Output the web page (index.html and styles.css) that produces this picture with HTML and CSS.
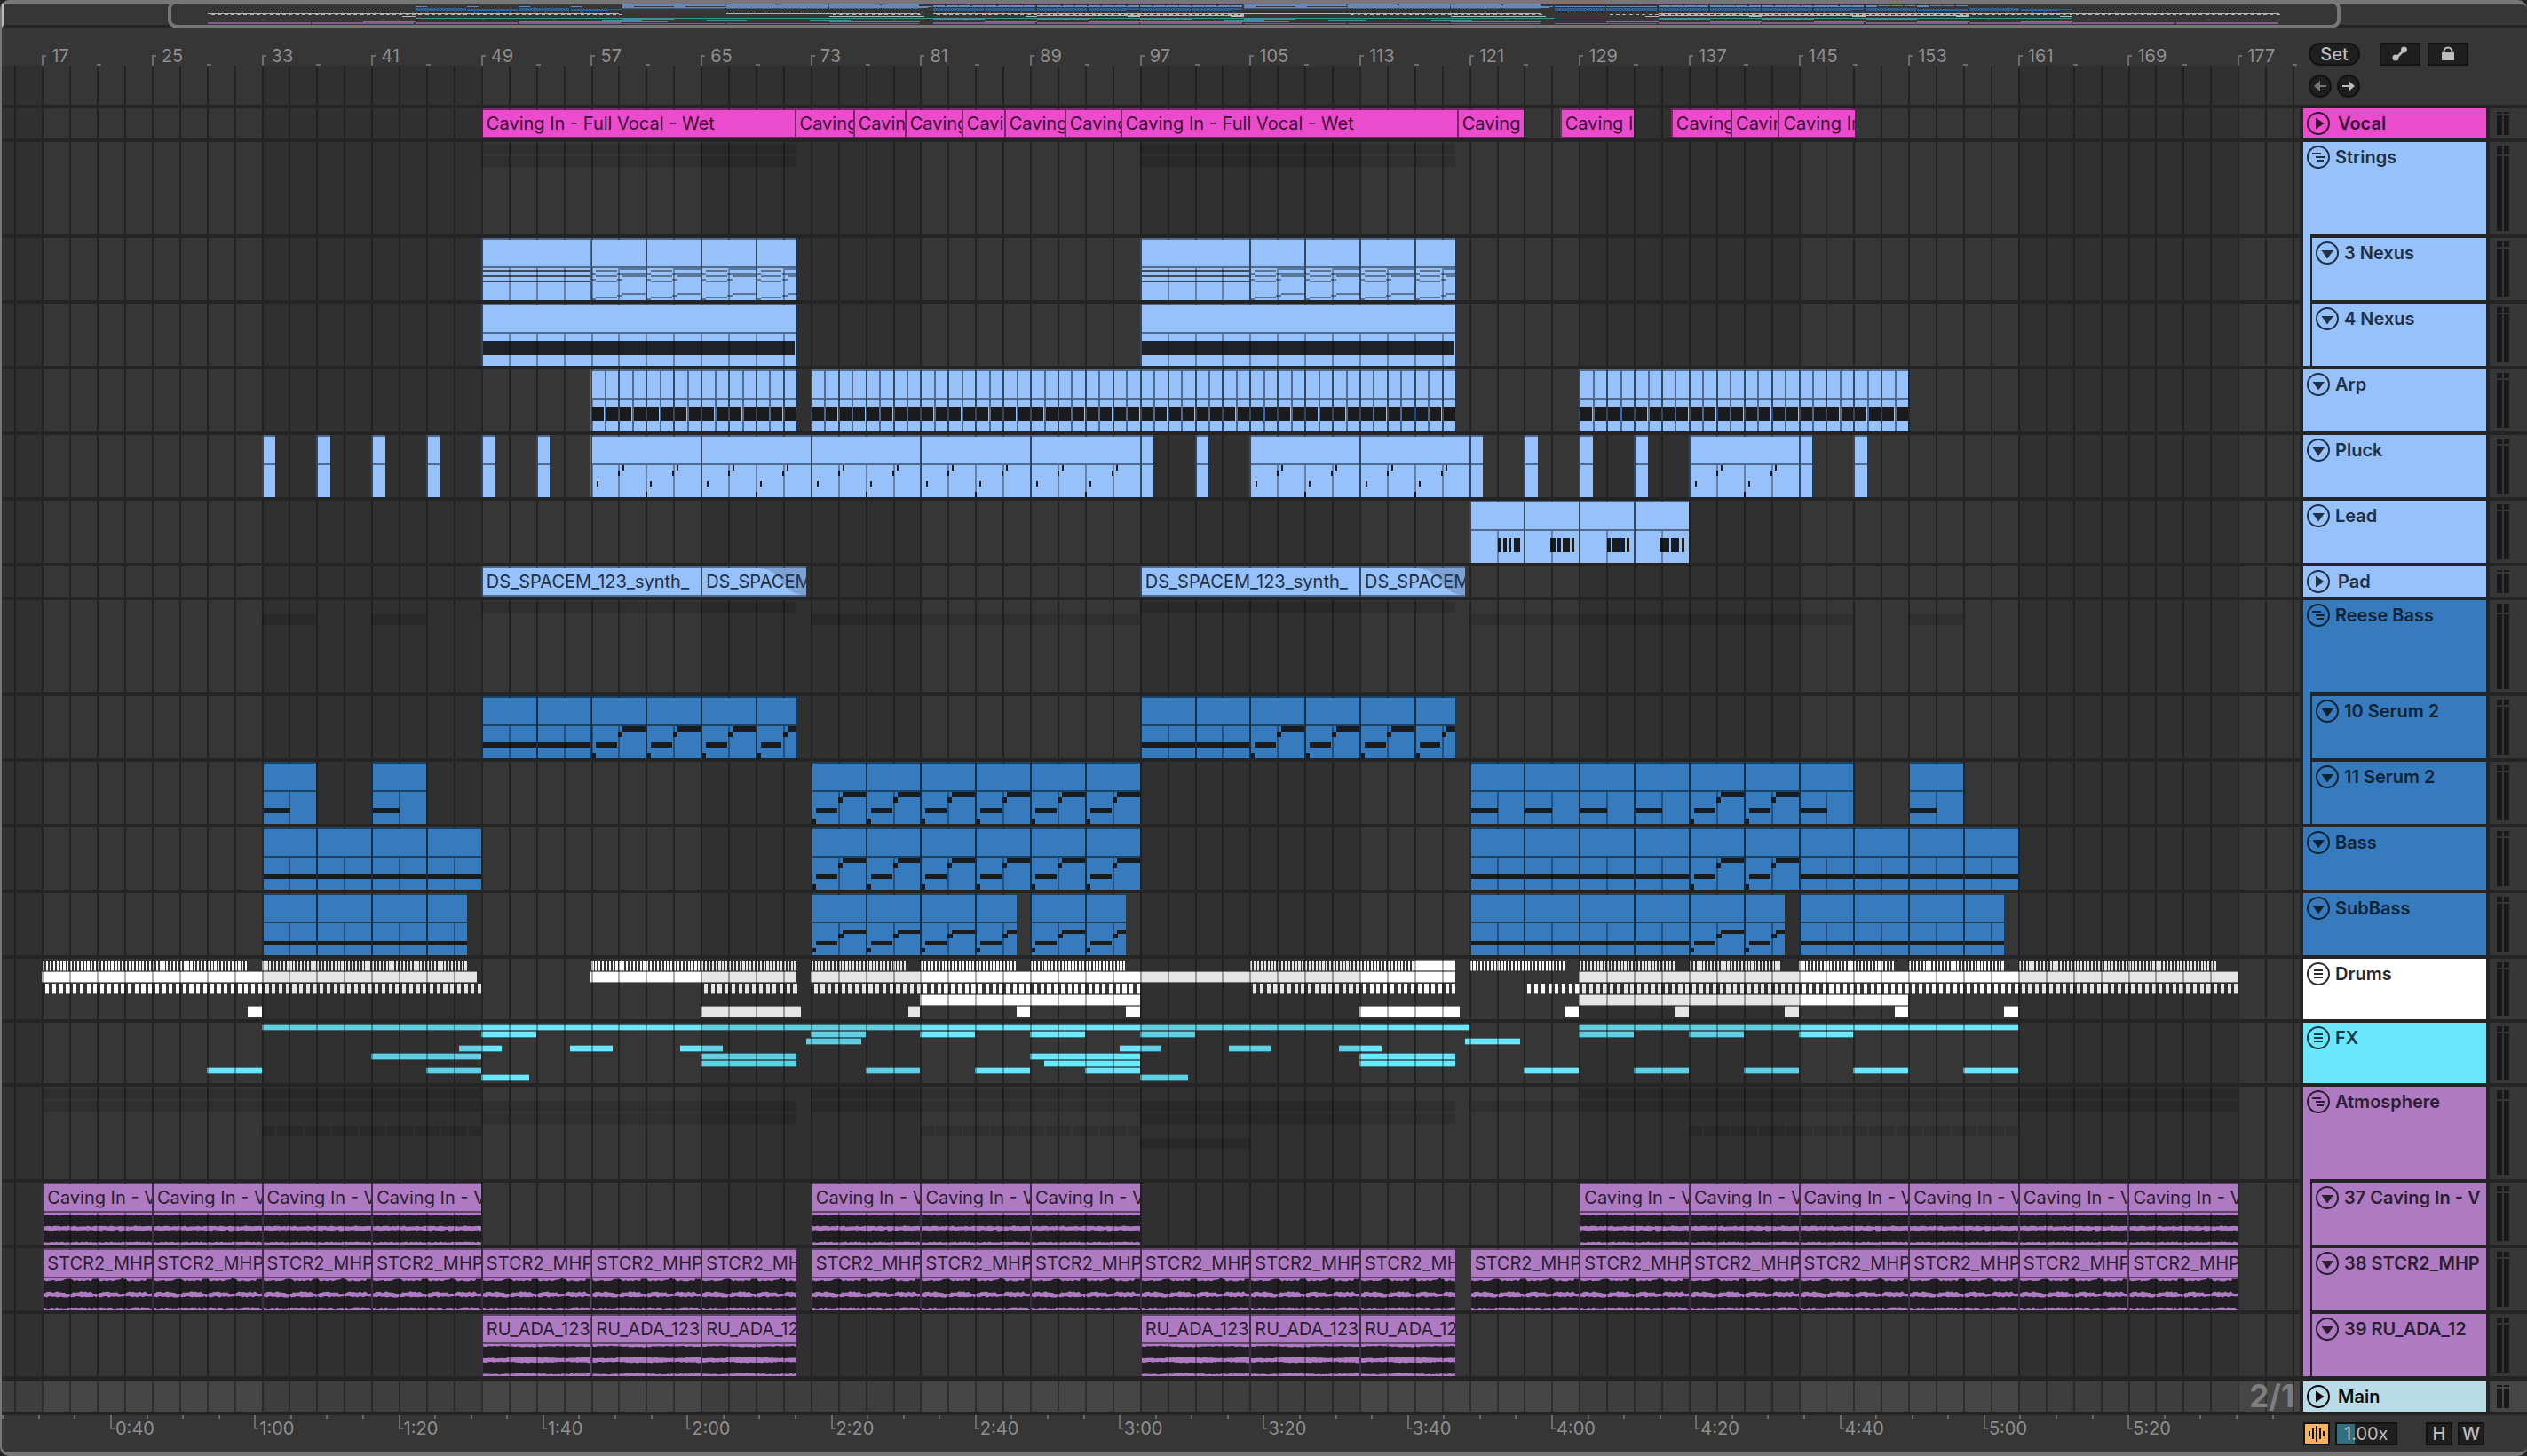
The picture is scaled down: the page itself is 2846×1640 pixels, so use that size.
FILE: index.html
```html
<!DOCTYPE html>
<html lang="en">
<head>
<meta charset="utf-8">
<title>Arrangement</title>
<link rel="stylesheet" href="styles.css">
</head>
<body>
<svg class="symbols" aria-hidden="true">
  <symbol id="i-play" viewBox="0 0 26 26"><circle cx="13" cy="13" r="12" fill="none" stroke="currentColor" stroke-width="2"/><path d="M10 6.5 19.5 13 10 19.5z" fill="currentColor"/></symbol>
  <symbol id="i-fold" viewBox="0 0 26 26"><circle cx="13" cy="13" r="12" fill="none" stroke="currentColor" stroke-width="2"/><path d="M6.5 10h13.500L13 19.500z" fill="currentColor"/></symbol>
  <symbol id="i-group" viewBox="0 0 26 26"><circle cx="13" cy="13" r="12" fill="none" stroke="currentColor" stroke-width="2"/><path d="M6 9h10M10 13h10M11 17h8" stroke="currentColor" stroke-width="2"/></symbol>
  <symbol id="i-list" viewBox="0 0 26 26"><circle cx="13" cy="13" r="12" fill="none" stroke="currentColor" stroke-width="2"/><path d="M8 9h10M8 13h10M8 17h10" stroke="currentColor" stroke-width="2"/></symbol>
</svg>
<main class="window">
  <div class="overview" id="overview"><div class="viewport"></div></div>

  <header class="top">
    <div class="ruler" id="bars"></div>
    <div class="tools">
      <div class="tool-row">
        <button class="pill">Set</button>
        <button class="tool" aria-label="Automation mode"><svg width="20" height="20" viewBox="0 0 20 20"><path d="M5 15 15 5" stroke="currentColor" stroke-width="2.500"/><circle cx="5" cy="14" r="3.500" fill="currentColor"/><circle cx="14.500" cy="5" r="3.500" fill="currentColor"/></svg></button>
        <button class="tool" aria-label="Lock envelopes"><svg width="20" height="20" viewBox="0 0 20 20"><path d="M5.500 10V7a4.500 4.500 0 0 1 9 0v3" fill="none" stroke="currentColor" stroke-width="2"/><path d="M3 8h14v9H3z" fill="currentColor"/></svg></button>
      </div>
      <div class="tool-row arrows">
        <button class="round dim" aria-label="Previous locator"><svg width="22" height="22" viewBox="0 0 22 22"><path d="M4 11 11 5v5h7v2h-7v5z" fill="currentColor"/></svg></button>
        <button class="round" aria-label="Next locator"><svg width="22" height="22" viewBox="0 0 22 22"><path d="M18 11 11 5v5H4v2h7v5z" fill="currentColor"/></svg></button>
      </div>
    </div>
  </header>

  <div class="tracks" id="tracks"></div>

  <footer class="bottom">
    <div class="time" id="time"></div>
    <div class="zoombar">
      <button class="wave-btn" aria-label="Optimize waveform height"><svg width="26" height="22" viewBox="0 0 26 22"><path d="M5 8v6M9 5v12M13 2v18M17 5v12M21 8v6" stroke="#111" stroke-width="2"/></svg></button>
      <input class="factor" type="text" value="1.00x" aria-label="Waveform zoom">
      <button class="letter first">H</button>
      <button class="letter">W</button>
    </div>
  </footer>
</main>
<script src="app.js"></script>
</body>
</html>
```
FILE: styles.css
```css
* { box-sizing: border-box; }
body {
  margin: 0;
  background: #242424;
  font-family: Inter, "Liberation Sans", sans-serif;
  font-size: 20px;
  line-height: 24px;
  color: #bdbdbd;
}
button, input { font: inherit; color: inherit; margin: 0; padding: 0; border: 0; background: none; }
svg { display: block; }
.symbols { position: absolute; width: 0; height: 0; }

.window {
  min-height: 100vh;
  display: flex;
  flex-direction: column;
  background: #363636;
  border: solid #777;
  border-width: 4px 0 4px 2px;
  border-radius: 10px;
}

/* overview strip */
.overview {
  position: relative;
  height: 28px;
  border-bottom: 4px solid #242424;
  border-left: 2px solid #bbb;
}
.overview svg { width: 100%; height: 24px; }
.viewport {
  position: absolute;
  top: -4px;
  left: 6.5%;
  width: 86.1%;
  height: 32px;
  border: 4px solid #777;
  border-radius: 10px;
}

/* bar ruler and tools */
.top { display: flex; height: 86px; }
.ruler, .time { position: relative; flex: 1; overflow: hidden; color: #8f8f8f; }
.ruler .grid { top: 42px; height: 44px; }
.ruler .shade { top: 42px; height: 44px; }
.mark { position: absolute; top: 30px; height: 12px; border-left: 2px solid #6c6c6c; }
.mark::before { content: ""; position: absolute; left: 0; top: 0; width: 3px; height: 2px; background: #6c6c6c; }
.mark span { position: absolute; left: 9px; top: -11px; }
.mark.minor { top: 40px; height: 2px; }
.tools { width: 256px; padding: 16px 0 0 10px; }
.tool-row { display: flex; align-items: center; gap: 8px; height: 26px; margin-bottom: 10px; }
.arrows { gap: 6px; }
.pill, .tool, .round, .letter, .factor, .wave-btn {
  display: flex;
  align-items: center;
  justify-content: center;
  height: 26px;
  background: #1f1f1f;
  border: 2px solid #121212;
}
.pill { width: 58px; border-radius: 13px; margin-right: 14px; font-weight: 500; }
.tool { width: 46px; }
.round { width: 26px; border-radius: 50%; }
.round.dim { color: #777; }

/* tracks */
.tracks { display: flex; flex-direction: column; gap: 4px; background: #242424; padding: 4px 0; }
.track { display: flex; gap: 4px; height: 70px; }
.track.short { height: 34px; }
.track.mid { height: 68px; }
.track.tall { height: 104px; }
.track.main { margin-top: 2px; }
.lane { position: relative; flex: 1; min-width: 0; background: #363636; overflow: hidden; isolation: isolate; }
.main .lane, .main .meter { background: #464646; }
.layer, .shade, .grid { position: absolute; left: 0; top: 0; width: 100%; height: 100%; }
.grid { z-index: 1; }
.scale { position: relative; z-index: 2; padding: 4px 6px 0 0; text-align: right; font-size: 35px; line-height: 24px; font-weight: 700; color: #7e7e7e; }

.head { width: 206px; display: flex; }
.strip { width: 10px; margin-top: -4px; background: var(--c); border-right: 2px solid #242424; }
.label {
  flex: 1;
  min-width: 0;
  display: flex;
  align-items: flex-start;
  gap: 6px;
  padding: 4px 4px 0 4px;
  background: var(--c);
  color: var(--t);
  font-weight: 600;
  white-space: nowrap;
  overflow: hidden;
}
.label svg { width: 26px; height: 26px; }
.short .label { gap: 9px; }
.label button { flex: none; }
.label span { line-height: 26px; }
.meter {
  width: 42px;
  display: grid;
  grid-template: 6px 1fr / 6px 6px;
  gap: 2px;
  padding: 4px 8px;
  background: #363636;
}
.short .meter { grid-template-rows: 2px 1fr; }
.tall .meter { grid-template-rows: 10px 1fr; }
.meter i { background: #191919; }

.pink { --c: #ec4bcd; --e: #7b2469; --t: #3b1133; }
.light { --c: #97c1fa; --e: #4f6a8c; --t: #1f3144; }
.blue { --c: #357bbd; --e: #1b4367; --t: #0e2236; }
.white { --c: #fff; --e: #999; --t: #2a2a2a; }
.cyan { --c: #6de7fd; --e: #3f8f9d; --t: #173a41; }
.purple { --c: #ae7ac1; --e: #5f4269; --t: #2b1e31; }
.pale { --c: #b8dde9; --e: #667; --t: #0b0b0b; }

/* clips */
.clip { position: absolute; top: 0; bottom: 0; background: var(--c); border: solid var(--e); border-width: 2px 0 0 2px; overflow: hidden; }
.title {
  position: relative;
  z-index: 2;
  height: 32px;
  padding-left: 4px;
  line-height: 31px;
  background: var(--c);
  color: var(--t);
  border-bottom: 2px solid var(--e);
  white-space: nowrap;
  overflow: hidden;
}
.clip .notes { width: 100%; height: 36px; }
.fade { position: absolute; right: 0; top: 0; width: 52px; height: 30px; }
.ghost { position: absolute; height: 12px; background: rgba(0, 0, 0, .13); }

/* time ruler */
.bottom { display: flex; flex: 1; min-height: 42px; }
.tick { position: absolute; top: 0; height: 4px; border-left: 2px solid #6c6c6c; }
.tick.major { height: 16px; }
.tick.major::before { content: ""; position: absolute; left: 0; bottom: 0; width: 3px; height: 2px; background: #6c6c6c; }
.tick span { position: absolute; left: 4px; top: 3px; }
.zoombar { width: 256px; padding: 8px 0 0 4px; display: flex; gap: 6px; }
.wave-btn { width: 30px; background: #f6b25f; }
.factor { width: 70px; padding-left: 8px; background: linear-gradient(90deg, #2f6f80 20px, #1f1f1f 20px); }
.letter { width: 30px; font-weight: 500; }
.letter.first { margin-left: 26px; }
```
FILE: app.js
```js
// Bars visible in the arrangement: the first one and how many fit.
const START = 14.07, SPAN = 167.45;
const pct = b => (b - START) / SPAN * 100 + '%';
const wid = n => n / SPAN * 100 + '%';
const rect = (x, y, w, h) => `M${x} ${y}h${w}v${h}h${-w}z`;
const svg = (cls, box, inner) =>
  `<svg class="${cls}" viewBox="${box}" preserveAspectRatio="none" shape-rendering="crispEdges">${inner}</svg>`;

let lines = '';
for (let b = 15; b <= 181; b += 2) lines += `M${b} 0V10`;
const GRID = svg('grid', `${START - 0.065} 0 ${SPAN} 10`,
  `<path d="${lines}" stroke="#000" stroke-opacity=".33" stroke-width="2" vector-effect="non-scaling-stroke"/>`);
let bands = '';
for (let b = 1; b < 180; b += 32) bands += rect(b, 0, 16, 10);
const SHADE = svg('shade', `${START} 0 ${SPAN} 10`, `<path d="${bands}" fill="#000" fill-opacity=".1"/>`);

// [first bar, last bar, step] -> list of [start, end]
function split(ranges) {
  const out = [];
  for (const [a, z, s, kind] of ranges)
    for (let b = a; b < z; b += s || z - a) out.push([b, Math.min(z, b + (s || z - a)), kind]);
  return out;
}

// Note patterns: [start, length, y, height]
const P = {
  hold: [[0, 4, 18, 6]],
  half: [[0, 2, 18, 6]],
  riff: [[0, .28, 30, 6], [.3, 1.55, 18, 6], [1.95, .33, 6, 6], [2.3, 1.7, 0, 6]],
  shold: [[0, 4, 20, 4]],
  sriff: [[0, .28, 28, 4], [.3, 1.6, 20, 4], [1.95, .4, 12, 4], [2.3, 1.7, 8, 4]],
  chord: [[0, 8, 2, 2], [0, 8, 8, 2], [0, 8, 14, 2]],
  change: [[0, .3, 6, 2], [0, .3, 12, 3], [0, .3, 34, 2], [.3, 1.55, 2, 2], [.3, 1.55, 8, 2], [.3, 1.55, 14, 2], [.3, 1.55, 32, 2],
    [1.9, .4, 6, 2], [1.9, .4, 12, 2], [1.9, .4, 30, 2], [2.1, 1.9, 0, 2], [2.3, 1.7, 6, 4], [2.3, 1.7, 28, 2]],
  block: [[0, 22.85, 8, 16]],
  arp: [[0, 1, 8, 16]],
  pluck: [[.3, .13, 18, 6], [1.9, .13, 6, 6], [2.25, .13, 0, 6], [3.95, .13, 30, 6], [4.3, .13, 18, 6], [5.9, .13, 6, 6], [6.25, .13, 0, 6]],
  lead1: [[2, .28, 8, 16], [2.41, .25, 8, 16], [2.79, .25, 8, 16], [3.2, .5, 8, 16]],
  lead2: [[1.88, .4, 8, 16], [2.41, .25, 8, 16], [2.79, .53, 8, 16], [3.45, .25, 8, 16]],
  lead3: [[2, .28, 8, 16], [2.41, .5, 8, 16], [3.04, .28, 8, 16], [3.45, .25, 8, 16]],
  lead4: [[1.88, .66, 8, 16], [2.66, .25, 8, 16], [3.04, .25, 8, 16], [3.45, .25, 8, 16]]
};
const note = ([start, len, y, h]) => rect(start, y, len, h);
const INK = { chord: '#3c4c62', change: '#5b7596', block: '#1f2227' };

const noise = i => { const s = Math.sin(i * 127.1 + 3.7) * 43758.5453; return s - Math.floor(s); };

// Two-channel waveform over len bars; peaks mark the accents.
function wave(len, kind) {
  const step = .13, n = Math.round(len / step);
  const amp = (i, ch) => {
    const b = i * step, k = noise(i + ch * 500 + kind.length * 31);
    let a = 5.6 + k * 1.2;
    if (kind === 'beat') {
      const d = Math.abs(((b + .15) % 2) - 2 * Math.round((b + .15) % 2 / 2));
      a = 5.4 + k * 1.8 + (d < .3 && b > 1 && ch === 0 ? 3 - d * 6 : 0);
    }
    if (kind === 'air' && ch === 1 && Math.abs(b - 5.45) < .1) a += 2;
    if (kind === 'swell') a = 5.8 + k + Math.sin(b * 1.3) * .5;
    return a;
  };
  let d = '';
  [9, 27].forEach((mid, ch) => {
    d += `M0 ${mid}`;
    for (let i = 0; i <= n; i++) d += `L${(i * step).toFixed(2)} ${(mid - amp(i, ch)).toFixed(1)}`;
    for (let i = n; i >= 0; i--) d += `L${(i * step).toFixed(2)} ${(mid + amp(i + 77, ch)).toFixed(1)}`;
    d += 'z';
  });
  return d;
}

const vocal = [71.82, 76.1, 79.85, 84, 87.1, 91.5, 95.57, 120.1, 125].map((b, i, a) => [b, a[i + 1]]).slice(0, -1);
const name = (text, list) => list.map(c => [c[0], c[1], c[2], text]);
const leads = [1, 2, 3, 4].map(i => [117 + 4 * i, 121 + 4 * i, 'lead' + i]);

const ticksA = [[17, 32], [33, 48], [57, 72], [73, 80], [81, 88], [89, 96], [105, 117], [121, 128], [129, 136], [137, 143.7], [145, 152], [153, 160], [161, 175.6]];
const ticksC = [[17, 49], [65, 72], [73, 97], [105, 120], [125, 177]];
const fillers = [[32, 33], [65, 72.3], [80.1, 81], [88, 89], [96, 97], [113, 120.3], [128, 129], [136, 137], [144, 145], [152, 153], [160, 161]];
const drumRows = [
  [0, [...ticksA.flatMap(([a, z]) => { const o = []; for (let b = a + .06; b < z - .05; b += .25) o.push([b, b + .14]); return o; }), [117, 120]]],
  [1, [[17, 48.7], [57, 72], [73, 120], [129, 177]]],
  [2, ticksC.flatMap(([a, z]) => { const o = []; for (let b = a + .25; b < z; b += .5) o.push([b, b + .27]); return o; })],
  [3, [[81, 97], [129, 153]]],
  [4, fillers]
];
const fxRows = [
  [0, [[33, 121], [129, 161]]],
  [1, [[49, 53], [73, 77], [81, 85], [89, 93], [97, 101], [129, 133], [137, 141], [145, 149]]],
  [2, [[72.7, 76.7], [120.7, 124.7]]],
  [3, [[47.4, 50.5], [55.5, 58.6], [63.5, 66.6], [95.5, 98.6], [103.5, 106.5], [111.5, 114.6]]],
  [4, [[41, 49], [65, 72], [89, 97], [113, 120]]],
  [5, [[65, 72], [90, 97], [113, 120]]],
  [6, [[29, 33], [45, 49], [77, 81], [85, 89], [93, 97], [125, 129], [133, 137], [141, 145], [149, 153], [157, 161]]],
  [7, [[49, 52.5], [97, 100.5]]]
];
// Two-bar blocks that start one bar in, with a hairline between them
const dotted = (a, z) => {
  const o = [[a, a + 1]];
  for (let b = a + 1; b < z; b += 2) o.push([b + .13, Math.min(z, b + 2)]);
  return o;
};

const TRACKS = [
  { n: 'Vocal', c: 'pink', size: 'short', icon: 'play', y: [0], clips: name('Caving In - Full Vocal - Wet', [[49, 71.82], ...vocal, [127.6, 133], [135.7, 140.05], [140.05, 143.5], [143.5, 149.1]]) },
  { n: 'Strings', c: 'light', size: 'tall', icon: 'group', ghosts: [[0, [[49, 72], [97, 120]]], [1, [[49, 72], [97, 120]]]] },
  { n: '3 Nexus', c: 'light', child: 1, icon: 'fold', y: [1], clips: split([[49, 57, 8, 'chord'], [57, 72, 4, 'change'], [97, 105, 8, 'chord'], [105, 120, 4, 'change']]) },
  { n: '4 Nexus', c: 'light', child: 1, icon: 'fold', y: [2], clips: split([[49, 72, 0, 'block'], [97, 120, 0, 'block']]) },
  { n: 'Arp', c: 'light', icon: 'fold', y: [2], clips: split([[57, 72, 1, 'arp'], [73, 120, 1, 'arp'], [129, 153, 1, 'arp']]) },
  { n: 'Pluck', c: 'light', icon: 'fold', y: [3], clips: split([[33, 34], [37, 38], [41, 42], [45, 46], [49, 50], [53, 54], [57, 97, 8, 'pluck'], [97, 98], [101, 102], [105, 121, 8, 'pluck'], [121, 122], [125, 126], [129, 130], [133, 134], [137, 145, 8, 'pluck'], [145, 146], [149, 150]]) },
  { n: 'Lead', c: 'light', icon: 'fold', y: [3], clips: leads },
  { n: 'Pad', c: 'light', size: 'short', icon: 'play', y: [4], clips: name('DS_SPACEM_123_synth_', [[49, 65], [65, 72.67, 'fade'], [97, 113], [113, 120.67, 'fade']]) },
  { n: 'Reese Bass', c: 'blue', size: 'tall', icon: 'group', ghosts: [[0, [[49, 72], [97, 120]]], [1, [[33, 37], [41, 45], [73, 97], [121, 149], [153, 157]]]] },
  { n: '10 Serum 2', c: 'blue', child: 1, icon: 'fold', y: [5], clips: split([[49, 57, 4, 'hold'], [57, 72, 4, 'riff'], [97, 105, 4, 'hold'], [105, 120, 4, 'riff']]) },
  { n: '11 Serum 2', c: 'blue', child: 1, icon: 'fold', y: [5], clips: split([[33, 37, 4, 'half'], [41, 45, 4, 'half'], [73, 97, 4, 'riff'], [121, 137, 4, 'half'], [137, 145, 4, 'riff'], [145, 149, 4, 'half'], [153, 157, 4, 'half']]) },
  { n: 'Bass', c: 'blue', icon: 'fold', y: [6], clips: split([[33, 49, 4, 'hold'], [73, 97, 4, 'riff'], [121, 137, 4, 'hold'], [137, 145, 4, 'riff'], [145, 161, 4, 'hold']]) },
  { n: 'SubBass', c: 'blue', icon: 'fold', y: [7], clips: split([[33, 48, 4, 'shold'], [73, 88, 4, 'sriff'], [89, 96, 4, 'sriff'], [121, 137, 4, 'shold'], [137, 144, 4, 'sriff'], [145, 160, 4, 'shold']]) },
  { n: 'Drums', c: 'white', size: 'mid', icon: 'list', rows: drumRows, pitch: 13, h: 12 },
  { n: 'FX', c: 'cyan', size: 'mid', icon: 'list', rows: fxRows, pitch: 8.15, h: 7 },
  { n: 'Atmosphere', c: 'purple', size: 'tall', icon: 'group', ghosts: [[0, [[17, 49], [73, 97], [129, 177]]], [1, [[17, 72], [73, 120], [121, 177]]], [2, [[49, 72], [97, 120]]], [3, [...dotted(33, 49), ...dotted(81, 97), ...dotted(137, 161)]], [4, [[97, 105]]]] },
  { n: '37 Caving In - V', c: 'purple', child: 1, icon: 'fold', y: [21], wave: 'air', clips: name('Caving In - Vocal', split([[17, 49, 8], [73, 97, 8], [129, 177, 8]])) },
  { n: '38 STCR2_MHP', c: 'purple', child: 1, icon: 'fold', y: [22], wave: 'beat', clips: name('STCR2_MHP', split([[17, 72, 8], [73, 120, 8], [121, 177, 8]])) },
  { n: '39 RU_ADA_12', c: 'purple', child: 1, icon: 'fold', y: [22], wave: 'swell', clips: name('RU_ADA_123', split([[49, 72, 8], [97, 120, 8]])) },
  { n: 'Main', c: 'pale', size: 'short main', icon: 'play', scale: '2/1' }
];

function lane(t) {
  let h = '';
  if (t.rows) {
    const tall = t.h > 8;
    let fill = '', edge = '';
    for (const [r, list] of t.rows) for (const [a, z] of list) {
      const y = Math.round(2 + r * t.pitch);
      fill += rect(a, y, z - a, t.h - 1);
      edge += rect(a, y + t.h - 1, z - a, 1);
      if (z - a > .5) edge += rect(a, y - 1, z - a, 1);
    }
    h += svg('layer', `${START} 0 ${SPAN} 68`, `<path d="${fill}" fill="var(--c)"/><path d="${edge}" fill="var(--e)" fill-opacity="${tall ? .8 : .7}"/>`);
  }
  h += SHADE;
  for (const [r, list] of t.ghosts || [])
    for (const [a, z] of list) h += `<div class="ghost" style="left:${pct(a)};width:${wid(z - a)};top:${2 + 14 * r}px"></div>`;
  for (const [a, z, kind, text] of t.clips || []) {
    let body = '';
    if (P[kind]) body = svg('notes', `0 0 ${z - a} 36`, `<path d="${P[kind].map(note).join('')}" fill="${INK[kind] || '#191b1d'}"/>`);
    if (t.wave) body = `<svg class="notes" viewBox="0 0 ${z - a} 36" preserveAspectRatio="none"><path d="${wave(z - a, t.wave)}" fill="#211e24"/></svg>`;
    const fade = kind === 'fade' ? '<svg class="fade" viewBox="0 0 52 30"><path d="M0 0C26 2 24 28 48 30H52V0z" fill="#1f3144" fill-opacity=".22"/></svg>' : '';
    h += `<div class="clip" style="left:${pct(a)};width:${wid(z - a)}"><div class="title">${text || ''}${fade}</div>${body}</div>`;
  }
  h += GRID;
  if (t.scale) h += `<div class="scale">${t.scale}</div>`;
  return h;
}

document.getElementById('tracks').innerHTML = TRACKS.map(t => `
  <section class="track ${t.size || ''} ${t.c}">
    <div class="lane">${lane(t)}</div>
    <div class="head">${t.child ? '<div class="strip"></div>' : ''}
      <div class="label"><button aria-label="Fold ${t.n}"><svg><use href="#i-${t.icon}"/></svg></button><span>${t.n}</span></div>
    </div>
    <div class="meter"><i></i><i></i><i></i><i></i></div>
  </section>`).join('');

// Bar ruler
let marks = SHADE + GRID;
for (let b = 17; b <= 181; b += 4)
  marks += (b - 17) % 8 ? `<div class="mark minor" style="left:${pct(b)}"></div>`
    : `<div class="mark" style="left:${pct(b)}"><span>${b}</span></div>`;
document.getElementById('bars').innerHTML = marks;

// Time ruler, one tick for each five seconds
let time = '';
for (let s = 25; s <= 340; s += 5) {
  const left = ((s - 40) * 8.115 + 122) / 2588 * 100 + '%';
  const major = s % 20 === 0 && s < 340;
  time += `<div class="tick ${major ? 'major' : ''}" style="left:${left}">${major ? `<span>${Math.floor(s / 60)}:${String(s % 60).padStart(2, '0')}</span>` : ''}</div>`;
}
document.getElementById('time').innerHTML = time;

// Overview: every clip as a one-pixel line
const COL = { pink: '#a03a8b', light: '#6689b5', blue: '#2b6194', white: '#b5b5b5', cyan: '#3f8f9c', purple: '#825b90' };
const DRUM_Y = [9, 11, 12, 13, 14];
let mini = '';
for (const t of TRACKS) {
  let d = '';
  for (const [a, z] of t.clips || []) d += rect(a, t.y[0], z - a - .1, 1);
  for (const [r, list] of t.rows || [])
    for (const [a, z] of list) d += rect(a, t.c === 'white' ? DRUM_Y[r] : 16 + Math.min(r, 4), z - a, 1);
  if (d) mini += `<path d="${d}" fill="${COL[t.c]}"/>`;
}
document.getElementById('overview').insertAdjacentHTML('afterbegin', svg('mini', '1.200 0 194.900 24', mini));
```
